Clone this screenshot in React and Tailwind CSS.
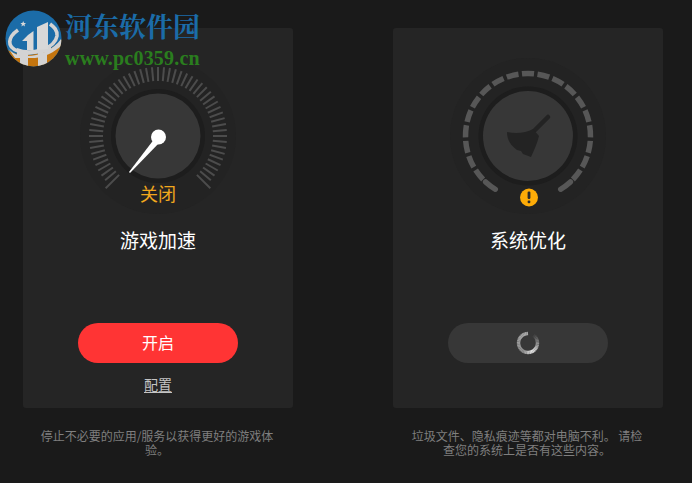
import React from 'react';

const cjk = { fontFamily: '"Noto Sans CJK SC", "Liberation Sans", sans-serif' };

// ticks of the game-boost dial, gap at the bottom
function Ticks() {
  const ticks = [];
  const line = (key, deg, r1, r2) => {
    const a = (deg * Math.PI) / 180;
    return (
      <line
        key={key}
        x1={78 + r1 * Math.sin(a)}
        y1={78 - r1 * Math.cos(a)}
        x2={78 + r2 * Math.sin(a)}
        y2={78 - r2 * Math.cos(a)}
        stroke="#4c4c4c"
        strokeWidth="2"
      />
    );
  };
  const n = 54;
  for (let i = 0; i <= n; i++) {
    const deg = -135 + (i * 270) / n;
    const last = i === 0 || i === n;
    ticks.push(line(i, deg, 55, last ? 74 : 69));
  }
  return ticks;
}

function BoostDial() {
  return (
    <svg width="156" height="156" viewBox="0 0 156 156">
      <circle cx="78" cy="78" r="78" fill="#232323" />
      <Ticks />
      <circle cx="78" cy="78" r="47" fill="#1d1d1d" />
      <circle cx="78" cy="78" r="42.5" fill="#373737" />
      <path d="M49 114 L75 80 L80 84 L50 115 Z" fill="#fff" />
      <circle cx="78.5" cy="79" r="7.5" fill="#fff" />
    </svg>
  );
}

function CleanDial() {
  const segs = [];
  const n = 21;
  for (let i = 0; i < n; i++) {
    const start = -150 + i * (300 / n) + 1.6;
    const end = start + 300 / n - 3.2;
    const p = (deg) => {
      const a = (deg * Math.PI) / 180;
      return `${78 + 62.5 * Math.sin(a)} ${78 - 62.5 * Math.cos(a)}`;
    };
    segs.push(<path key={i} d={`M${p(start)} A62.5 62.5 0 0 1 ${p(end)}`} fill="none" stroke="#575757" strokeWidth="5.5" strokeLinecap={i === 0 || i === n - 1 ? 'round' : 'butt'} />);
  }
  return (
    <svg width="156" height="156" viewBox="0 0 156 156">
      <circle cx="78" cy="78" r="78" fill="#232323" />
      {segs}
      <circle cx="78" cy="78" r="49.5" fill="#1d1d1d" />
      <circle cx="78" cy="78" r="45" fill="#373737" />
      {/* broom */}
      <path d="M98 59 L85 72" stroke="#232323" strokeWidth="4.5" strokeLinecap="round" />
      <path d="M57 74 C66 76 76 75 83 71 L89 78 C87 86 84 92 81 99 L73 96 L71 93 L67 92 C61 88 57 82 57 74 Z" fill="#232323" />
      {/* warning */}
      <circle cx="79" cy="139.5" r="9" fill="#fdab07" />
      <rect x="77.6" y="133.5" width="2.8" height="7.5" rx="1.2" fill="#2a2a2a" />
      <rect x="77.6" y="142.5" width="2.8" height="2.8" rx="1.2" fill="#2a2a2a" />
    </svg>
  );
}

// arc split in short pieces so the shade can run round the ring
function Spinner() {
  const parts = [];
  const n = 36;
  for (let i = 0; i < n; i++) {
    const t = i / n;
    const a1 = (-i * 9 * Math.PI) / 180;
    const a2 = (-(i + 1.1) * 9 * Math.PI) / 180;
    let v;
    if (t < 0.45) v = 170 - t * 60;
    else if (t < 0.62) v = 143 + (t - 0.45) * 500;
    else v = 228 - (t - 0.62) * 460;
    v = Math.max(58, Math.round(v));
    parts.push(
      <line
        key={i}
        x1={12 + 9.5 * Math.sin(a1)}
        y1={12 - 9.5 * Math.cos(a1)}
        x2={12 + 9.5 * Math.sin(a2)}
        y2={12 - 9.5 * Math.cos(a2)}
        stroke={`rgb(${v},${v},${v})`}
        strokeWidth="3.4"
      />
    );
  }
  return (
    <svg width="24" height="24" viewBox="0 0 24 24">
      {parts}
    </svg>
  );
}

function Logo() {
  return (
    <svg width="58" height="58" viewBox="0 0 58 58">
      <defs>
        <clipPath id="disc"><circle cx="28.5" cy="28.5" r="28" /></clipPath>
      </defs>
      <g clipPath="url(#disc)">
        <rect width="58" height="58" fill="#1b6ca8" />
        {/* orange lower part */}
        <path d="M0 38 C14 50 44 46 58 28 L58 58 L0 58 Z" fill="#c4750f" />
        {/* pale ring round the letters */}
        <path d="M13 20 C3 27 1 37 13 41 C28 46 50 38 52 26 C52.5 20 49 17 45 14" fill="none" stroke="#d3d3d3" strokeWidth="3.6" />
        <path d="M1 35 C6 44 14 46 22 46 C34 46 48 40 56 29 L58 34 C50 42 40 47 30 48 L10 48 Z" fill="#d3d3d3" />
        <path d="M12 38 Q28 44 46 34 L46 42 L12 46 Z" fill="#d3d3d3" />
        {/* legs */}
        <rect x="15" y="44" width="8" height="14" fill="#d3d3d3" />
        <rect x="33" y="43" width="9" height="15" fill="#d3d3d3" />
        {/* 1 */}
        <path d="M17 31 L23 25 L28.5 21 L28.5 40 L22 40 L22 31 Z" fill="#d8d8d8" />
        {/* column */}
        <path d="M32 17 L43 12 L43 39 L32 40 Z" fill="#d8d8d8" />
        {/* star */}
        <path d="M16 10 L17.2 13 L20 13 L17.8 15 L18.6 18 L16 16.2 L13.4 18 L14.2 15 L12 13 L14.8 13 Z" fill="#d8d8d8" transform="translate(7 4) scale(.7)" />
      </g>
    </svg>
  );
}

function Card({ dial, label, title, button, link, desc }) {
  return (
    <div className="w-[270px] flex flex-col items-center">
      <div className="w-full h-[380px] bg-[#252525] rounded-[3px] flex flex-col items-center pt-[30px] relative">
        {dial}
        {label && <span className="absolute top-[152px] text-[18px] leading-[26px] text-[#f2a81d]">{label}</span>}
        <h2 className="mt-[13px] text-[19px] leading-[26px] font-normal text-white">{title}</h2>
        <div className="mt-[70px]">{button}</div>
        {link && <a className="mt-[11px] text-[14px] leading-[20px] text-[#c4c4c4] underline underline-offset-2">{link}</a>}
      </div>
      <p className="mt-[21px] w-[236px] pr-[2px] text-[12px] leading-[14px] text-[#7f7f7f] text-center">{desc}</p>
    </div>
  );
}

export default function App() {
  return (
    <div className="relative w-[692px] h-[483px] overflow-hidden bg-[#1a1a1a]" style={cjk}>
      <div className="flex gap-[100px] pl-[23px] pt-[28px]">
        <Card
          dial={<BoostDial />}
          label="关闭"
          title="游戏加速"
          button={
            <button className="w-[160px] h-[40px] rounded-full bg-[#ff3434] text-white text-[16px] leading-[38px] pb-[2px]">开启</button>
          }
          link="配置"
          desc="停止不必要的应用/服务以获得更好的游戏体验。"
        />
        <Card
          dial={<CleanDial />}
          title="系统优化"
          button={
            <div className="w-[160px] h-[40px] rounded-full bg-[#373737] flex items-center justify-center">
              <Spinner />
            </div>
          }
          desc="垃圾文件、隐私痕迹等都对电脑不利。 请检查您的系统上是否有这些内容。"
        />
      </div>

      {/* site watermark over the page */}
      <div className="absolute left-[5px] top-[10px] flex items-start gap-[2px]">
        <Logo />
        <div className="flex flex-col">
          <span className="text-[27px] leading-[32px] font-bold text-[#1b6ca8]" style={{ fontFamily: '"Noto Serif CJK SC", "Noto Sans CJK SC", serif' }}>河东软件园</span>
          <span className="mt-[5px] text-[20px] leading-[22px] font-bold text-[#2a7d1e] tracking-[0.2px]" style={{ fontFamily: '"Liberation Serif", serif' }}>www.pc0359.cn</span>
        </div>
      </div>
    </div>
  );
}
